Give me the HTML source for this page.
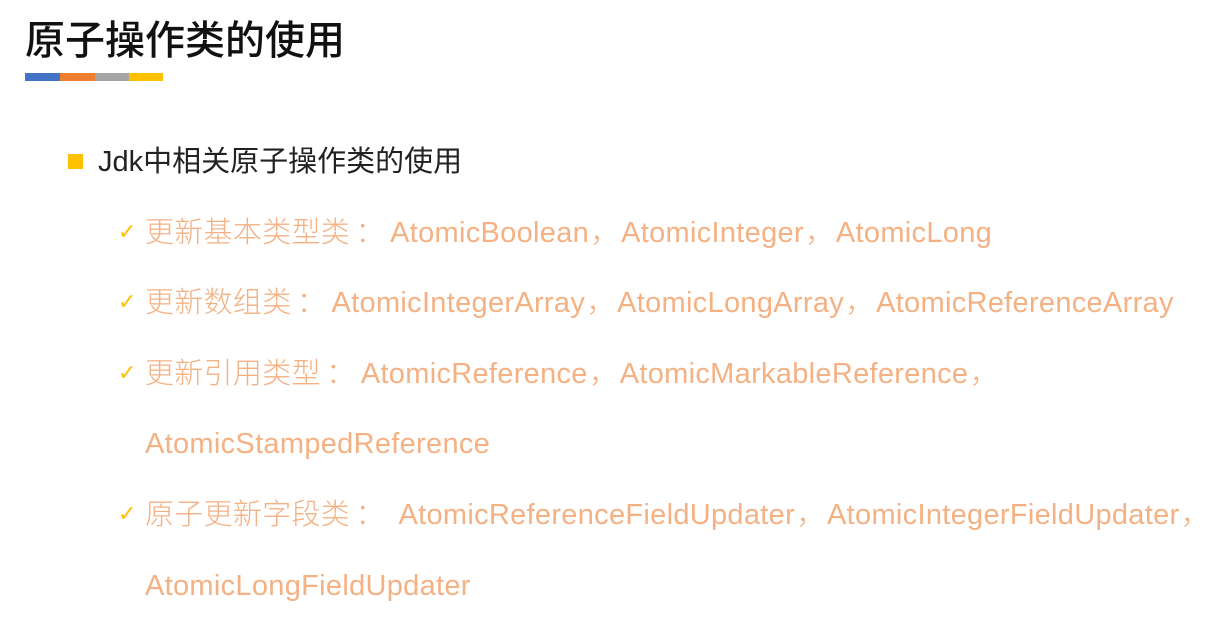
<!DOCTYPE html>
<html><head><meta charset="utf-8"><style>
html,body{margin:0;padding:0;background:#fff;width:1225px;height:634px;overflow:hidden;position:relative}
.t{position:absolute;left:25px;top:8px;font:500 40px "Liberation Sans","Noto Sans CJK SC",sans-serif;color:#111;white-space:nowrap}
.bar{position:absolute;top:73px;height:8px;width:35px}
.sq{position:absolute;left:68px;top:154px;width:15px;height:15px;background:#FFC000}
.h{position:absolute;left:98px;top:144px;font:400 29px "Liberation Sans","Noto Sans CJK SC",sans-serif;color:#222;white-space:nowrap;line-height:36px}
.l{position:absolute;left:145px;font:300 29px "Liberation Sans","Noto Sans CJK SC",sans-serif;color:#F4B183;white-space:nowrap;line-height:36px;letter-spacing:0.3px}
.c{position:absolute;left:118px;font:22px "DejaVu Sans",sans-serif;color:#FFC000;line-height:36px}
.p{display:inline-block;width:40px;text-align:center}
.k{display:inline-block;width:32px;text-align:center}
</style></head><body>
<div class="t">原子操作类的使用</div>
<div class="bar" style="left:25px;background:#4472C4"></div>
<div class="bar" style="left:60px;background:#ED7D31"></div>
<div class="bar" style="left:95px;background:#A5A5A5"></div>
<div class="bar" style="left:129px;width:34px;background:#FFC000"></div>
<div class="sq"></div>
<div class="h">Jdk中相关原子操作类的使用</div>
<div class="c" style="top:215px">✓</div>
<div class="l" style="top:215px">更新基本类型类<span class="p">：</span>AtomicBoolean<span class="k">，</span>AtomicInteger<span class="k">，</span>AtomicLong</div>
<div class="c" style="top:285px">✓</div>
<div class="l" style="top:285px">更新数组类<span class="p">：</span>AtomicIntegerArray<span class="k">，</span>AtomicLongArray<span class="k">，</span>AtomicReferenceArray</div>
<div class="c" style="top:356px">✓</div>
<div class="l" style="top:356px">更新引用类型<span class="p">：</span>AtomicReference<span class="k">，</span>AtomicMarkableReference<span class="k">，</span></div>
<div class="l" style="top:426px">AtomicStampedReference</div>
<div class="c" style="top:497px">✓</div>
<div class="l" style="top:497px">原子更新字段类<span class="p">：</span> AtomicReferenceFieldUpdater<span class="k">，</span>AtomicIntegerFieldUpdater<span class="k">，</span></div>
<div class="l" style="top:568px">AtomicLongFieldUpdater</div>
</body></html>
